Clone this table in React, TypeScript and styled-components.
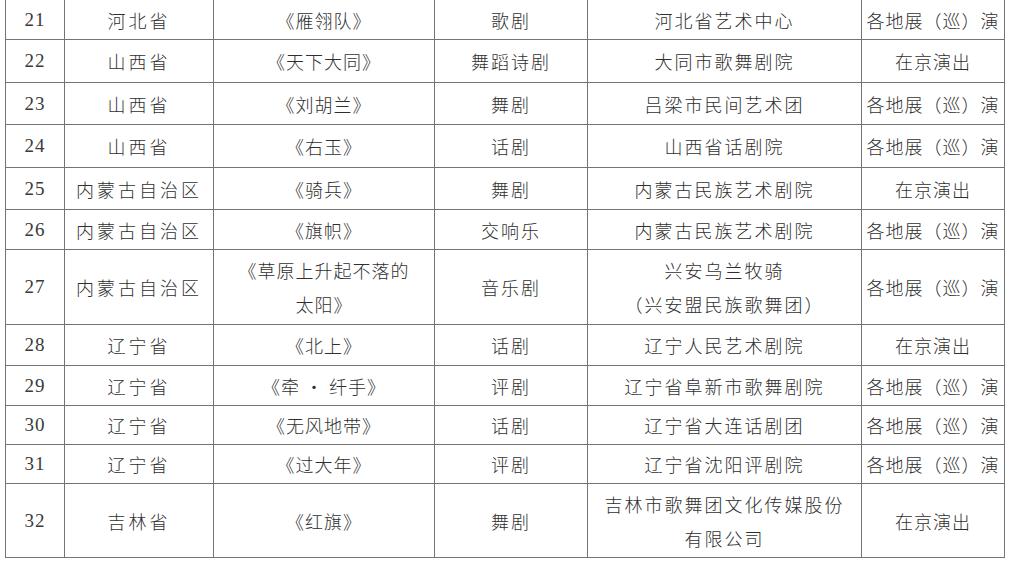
import React from 'react';
import styled, { createGlobalStyle } from 'styled-components';

const GlobalStyle = createGlobalStyle`
  html, body {
    margin: 0;
    padding: 0;
    background: #ffffff;
  }
  body {
    font-family: "Noto Sans CJK SC", "Noto Sans", sans-serif;
    color: #2f2f2f;
  }
`;

type Row = {
  no: string;
  region: string;
  title: string[];
  genre: string;
  troupe: string[];
  mode: string;
  h: number;
};

// column widths measured off the scan
const widths = [59, 149, 221, 153, 274, 143];

const rows: Row[] = [
  { no: '21', region: '河北省', title: ['《雁翎队》'], genre: '歌剧', troupe: ['河北省艺术中心'], mode: '各地展（巡）演', h: 40 },
  { no: '22', region: '山西省', title: ['《天下大同》'], genre: '舞蹈诗剧', troupe: ['大同市歌舞剧院'], mode: '在京演出', h: 43 },
  { no: '23', region: '山西省', title: ['《刘胡兰》'], genre: '舞剧', troupe: ['吕梁市民间艺术团'], mode: '各地展（巡）演', h: 42 },
  { no: '24', region: '山西省', title: ['《右玉》'], genre: '话剧', troupe: ['山西省话剧院'], mode: '各地展（巡）演', h: 43 },
  { no: '25', region: '内蒙古自治区', title: ['《骑兵》'], genre: '舞剧', troupe: ['内蒙古民族艺术剧院'], mode: '在京演出', h: 42 },
  { no: '26', region: '内蒙古自治区', title: ['《旗帜》'], genre: '交响乐', troupe: ['内蒙古民族艺术剧院'], mode: '各地展（巡）演', h: 40 },
  { no: '27', region: '内蒙古自治区', title: ['《草原上升起不落的', '太阳》'], genre: '音乐剧', troupe: ['兴安乌兰牧骑', '（兴安盟民族歌舞团）'], mode: '各地展（巡）演', h: 75 },
  { no: '28', region: '辽宁省', title: ['《北上》'], genre: '话剧', troupe: ['辽宁人民艺术剧院'], mode: '在京演出', h: 41 },
  { no: '29', region: '辽宁省', title: ['《牵 · 纤手》'], genre: '评剧', troupe: ['辽宁省阜新市歌舞剧院'], mode: '各地展（巡）演', h: 40 },
  { no: '30', region: '辽宁省', title: ['《无风地带》'], genre: '话剧', troupe: ['辽宁省大连话剧团'], mode: '各地展（巡）演', h: 39 },
  { no: '31', region: '辽宁省', title: ['《过大年》'], genre: '评剧', troupe: ['辽宁省沈阳评剧院'], mode: '各地展（巡）演', h: 39 },
  { no: '32', region: '吉林省', title: ['《红旗》'], genre: '舞剧', troupe: ['吉林市歌舞团文化传媒股份', '有限公司'], mode: '在京演出', h: 74 },
];

const Page = styled.div`
  padding: 0 0 0 5px;
  width: 1014px;
  height: 568px;
  box-sizing: border-box;
  overflow: hidden;
`;

const Table = styled.table`
  border-collapse: collapse;
  table-layout: fixed;
  width: 999px;
  margin-top: -1px;
`;

const Col = styled.col<{ $w: number }>`
  width: ${(p) => p.$w}px;
`;

const Tr = styled.tr<{ $h: number }>`
  height: ${(p) => p.$h}px;
`;

const Cell = styled.td<{ $spacing?: number }>`
  border: 1px solid #747474;
  padding: 0;
  text-align: center;
  vertical-align: middle;
  font-size: 18px;
  font-weight: 300;
  line-height: 34px;
  letter-spacing: ${(p) => p.$spacing ?? 2}px;
  white-space: nowrap;
  overflow: hidden;
`;

const NumCell = styled(Cell)`
  font-family: "Liberation Serif", "Times New Roman", serif;
  font-size: 19px;
  font-weight: 400;
  letter-spacing: 1px;
  color: #3a3a3a;
`;

const Line = styled.div`
  display: block;
`;

function Lines({ items }: { items: string[] }) {
  return (
    <>
      {items.map((t, i) => (
        <Line key={i}>{t}</Line>
      ))}
    </>
  );
}

export default function App() {
  return (
    <Page>
      <GlobalStyle />
      <Table>
        <colgroup>
          {widths.map((w, i) => (
            <Col key={i} $w={w} />
          ))}
        </colgroup>
        <tbody>
          {rows.map((r) => (
            <Tr key={r.no} $h={r.h}>
              <NumCell>{r.no}</NumCell>
              <Cell $spacing={3}>{r.region}</Cell>
              <Cell $spacing={1}>
                <Lines items={r.title} />
              </Cell>
              <Cell $spacing={2}>{r.genre}</Cell>
              <Cell $spacing={2}>
                <Lines items={r.troupe} />
              </Cell>
              <Cell $spacing={1}>{r.mode}</Cell>
            </Tr>
          ))}
        </tbody>
      </Table>
    </Page>
  );
}
